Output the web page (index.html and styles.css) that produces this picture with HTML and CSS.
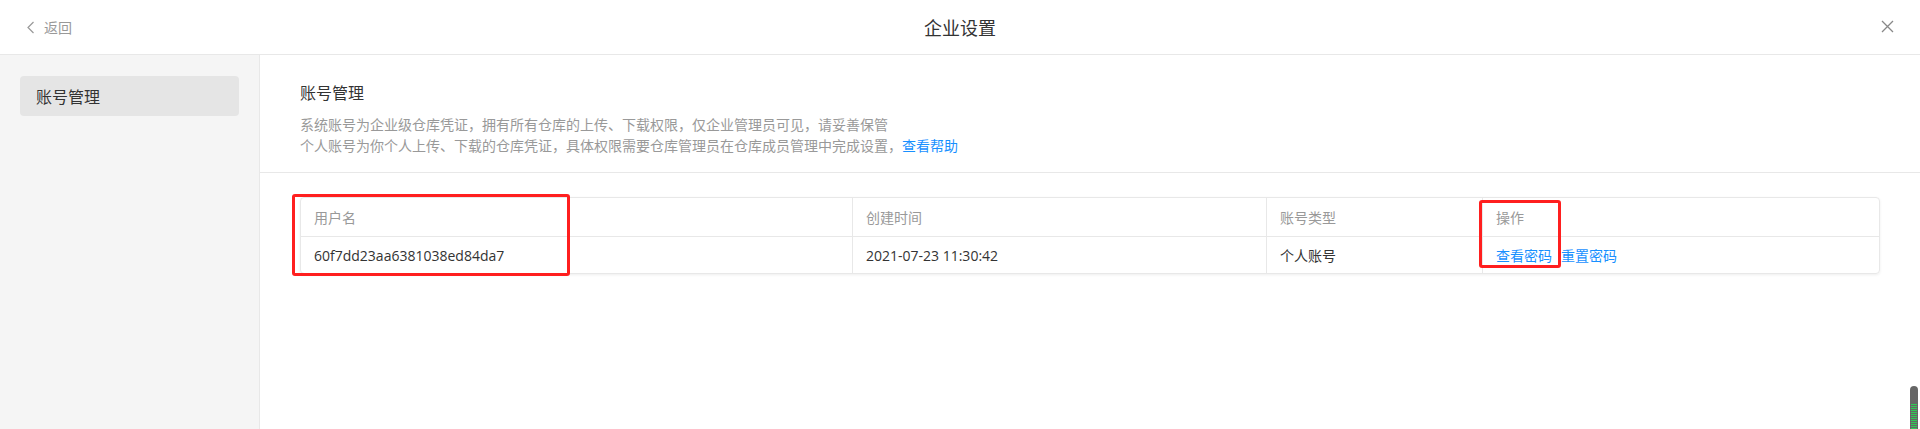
FILE: index.html
```html
<!DOCTYPE html>
<html lang="zh-CN">
<head>
<meta charset="utf-8">
<title>企业设置</title>
<link rel="stylesheet" href="styles.css">
</head>
<body>
<div class="page">
  <header class="topbar">
    <a class="back">
      <svg class="back-icon" width="9" height="13" viewBox="0 0 9 13"><path d="M7.5 1 L2 6.5 L7.5 12" fill="none" stroke="#999" stroke-width="1.2"/></svg>
      <span>返回</span>
    </a>
    <div class="title">企业设置</div>
    <div class="close">
      <svg width="13" height="13" viewBox="0 0 13 13"><path d="M1 1 L12 12 M12 1 L1 12" fill="none" stroke="#888" stroke-width="1.3"/></svg>
    </div>
  </header>
  <div class="content">
    <aside class="sidebar">
      <div class="nav-item">账号管理</div>
    </aside>
    <main class="main">
      <section class="intro">
        <h2 class="intro-title">账号管理</h2>
        <p class="intro-desc">系统账号为企业级仓库凭证，拥有所有仓库的上传、下载权限，仅企业管理员可见，请妥善保管<br>个人账号为你个人上传、下载的仓库凭证，具体权限需要仓库管理员在仓库成员管理中完成设置，<a class="link">查看帮助</a></p>
      </section>
      <section class="table-wrap">
        <div class="table">
          <div class="row head">
            <div class="cell">用户名</div>
            <div class="cell">创建时间</div>
            <div class="cell">账号类型</div>
            <div class="cell last">操作</div>
          </div>
          <div class="row body-row">
            <div class="cell">60f7dd23aa6381038ed84da7</div>
            <div class="cell">2021-07-23 11:30:42</div>
            <div class="cell">个人账号</div>
            <div class="cell last actions"><a class="link">查看密码</a><a class="link">重置密码</a></div>
          </div>
        </div>
      </section>
    </main>
  </div>
  <div class="mark mark-user"></div>
  <div class="mark mark-ops"></div>
  <div class="meter"><div class="meter-fill"></div></div>
</div>
</body>
</html>
```
FILE: styles.css
```css
* { box-sizing: border-box; }
html, body { margin: 0; padding: 0; }
body {
  font-family: "Open Sans", "Noto Sans CJK SC", sans-serif;
  color: #333;
  background: #fff;
}
.page {
  position: relative;
  width: 1920px;
  height: 429px;
  display: flex;
  flex-direction: column;
  overflow: hidden;
}
.topbar {
  height: 55px;
  flex: none;
  border-bottom: 1px solid #e8e8e8;
  display: grid;
  grid-template-columns: 1fr auto 1fr;
  align-items: center;
  padding: 0 26px;
}
.back {
  display: flex;
  align-items: center;
  gap: 9px;
  font-size: 14px;
  color: #999;
  font-family: "Noto Sans CJK SC", sans-serif;
  line-height: 20px;
}
.back-icon { margin-top: 1px; }
.title {
  font-size: 18px;
  font-family: "Noto Sans CJK SC", sans-serif;
  color: #333;
  line-height: 26px;
  margin-top: -1px;
}
.close {
  justify-self: end;
  display: flex;
  margin-top: -2px;
}
.content {
  flex: 1;
  display: flex;
  min-height: 0;
}
.sidebar {
  width: 260px;
  flex: none;
  background: #f5f5f5;
  border-right: 1px solid #e8e8e8;
  padding: 21px 20px;
}
.nav-item {
  height: 40px;
  line-height: 40px;
  background: #e5e5e5;
  border-radius: 4px;
  padding-left: 16px;
  font-size: 16px;
  font-family: "Noto Sans CJK SC", sans-serif;
  color: #333;
}
.main { flex: 1; }
.intro {
  padding: 25px 40px 16px;
  border-bottom: 1px solid #e8e8e8;
}
.intro-title {
  margin: 0;
  font-size: 16px;
  line-height: 24px;
  font-weight: normal;
  color: #333;
  font-family: "Noto Sans CJK SC", sans-serif;
}
.intro-desc {
  margin: 10px 0 0;
  font-size: 14px;
  line-height: 21px;
  color: #999;
  font-family: "Noto Sans CJK SC", sans-serif;
}
.link { color: #1890ff; cursor: pointer; }
.table-wrap { padding: 24px 40px; }
.table {
  border: 1px solid #e8e8e8;
  border-radius: 4px;
  box-shadow: 0 1px 3px rgba(0,0,0,0.07);
  font-size: 14px;
}
.row {
  display: grid;
  grid-template-columns: 552px 414px 216px 1fr;
}
.row.head {
  height: 39px;
  border-bottom: 1px solid #e8e8e8;
  color: #999;
}
.row.body-row {
  height: 36px;
  color: #333;
}
.cell {
  display: flex;
  align-items: center;
  padding-left: 13px;
  border-right: 1px solid #e8e8e8;
  white-space: nowrap;
}
.cell.last { border-right: none; }
.actions { gap: 9px; }
.mark {
  position: absolute;
  border: 3px solid #ff1f1f;
  border-radius: 3px;
  pointer-events: none;
}
.mark-user { left: 292px; top: 194px; width: 278px; height: 82px; }
.mark-ops { left: 1479px; top: 200px; width: 82px; height: 68px; }
.meter {
  position: absolute;
  left: 1910px;
  top: 386px;
  width: 8px;
  bottom: 0;
  background: #666;
  border-radius: 4px 4px 0 0;
  padding: 18px 1px 0;
}
.meter-fill {
  height: 100%;
  background: repeating-linear-gradient(to bottom, #2ecc55 0 1px, #666 1px 2px);
}
```
